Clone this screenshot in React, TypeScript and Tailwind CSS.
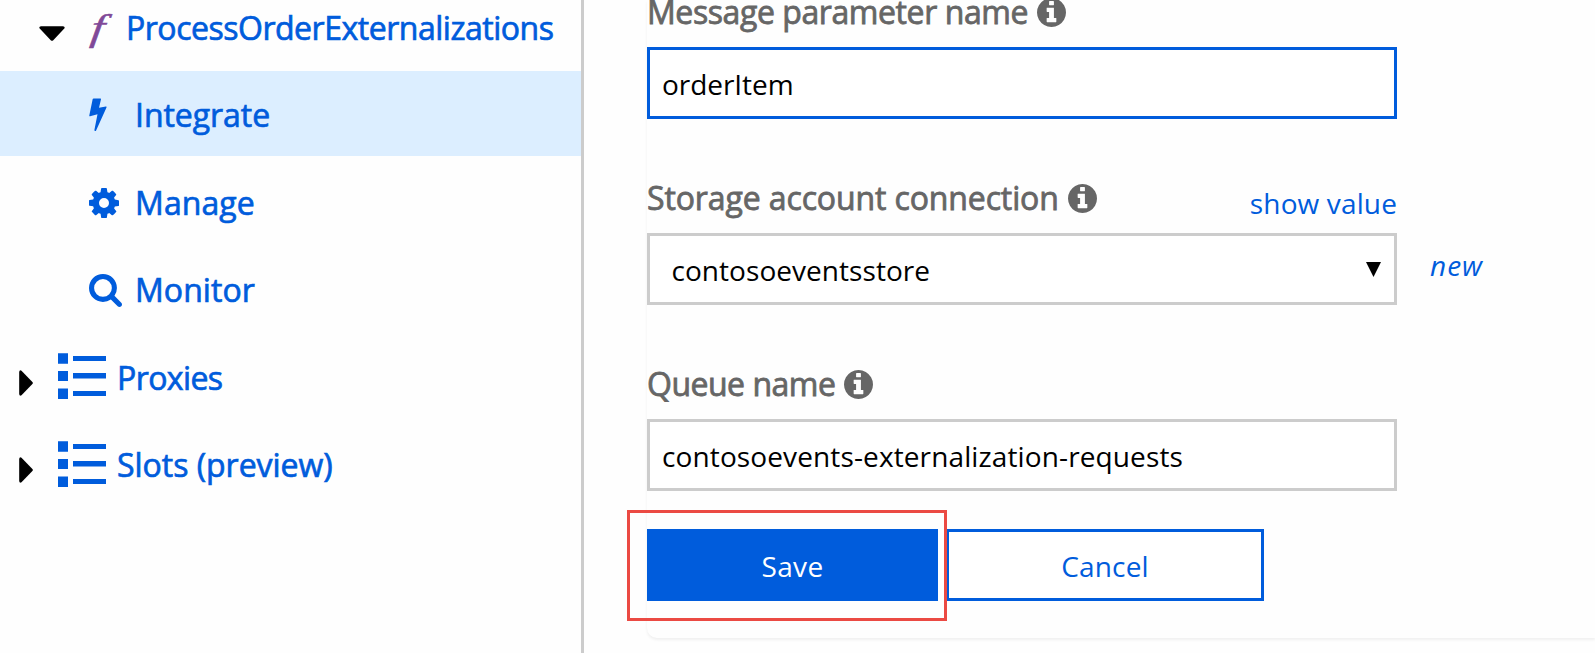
import type { ReactNode } from 'react';

function InfoIcon() {
  return (
    <svg className="h-[29px] w-[29px] shrink-0 fill-[#666]" viewBox="0 128 1536 1536">
      <path d="M1024 1376v-160q0-14-9-23t-23-9h-96v-512q0-14-9-23t-23-9h-320q-14 0-23 9t-9 23v160q0 14 9 23t23 9h96v320h-96q-14 0-23 9t-9 23v160q0 14 9 23t23 9h448q14 0 23-9t9-23zm-128-896v-160q0-14-9-23t-23-9h-192q-14 0-23 9t-9 23v160q0 14 9 23t23 9h192q14 0 23-9t9-23zm640 416q0 209-103 385.5t-279.5 279.5-385.5 103-385.5-103-279.5-279.5-103-385.5 103-385.5 279.5-279.5 385.5-103 385.5 103 279.5 279.5 103 385.5z" />
    </svg>
  );
}

function BoltIcon() {
  return (
    <svg className="mt-0.5 h-[34px] w-[18px] shrink-0 fill-[#005cdc]" viewBox="0 0 18 34">
      <path d="M4.6 .4H11.4Q12.2 .4 12 1.2L10 9.8 16.9 8.5Q17.9 8.4 17.5 9.4L7.1 32.5Q6.8 33 6.2 33 5.3 33 5.4 32L8.5 16.3 1.1 18.3Q.1 18.4 .3 17.4L3.7 1.1Q3.9 .4 4.6 .4Z" />
    </svg>
  );
}

function GearIcon() {
  return (
    <svg className="h-[30px] w-[30px] shrink-0 fill-[#005cdc]" viewBox="0 128 1536 1536">
      <path d="M1024 896q0-106-75-181t-181-75-181 75-75 181 75 181 181 75 181-75 75-181zm512-109v222q0 12-8 23t-20 13l-185 28q-19 54-39 91 35 50 107 138 10 12 10 25t-9 23q-27 37-99 108t-94 71q-12 0-26-9l-138-108q-44 23-91 38-16 136-29 186-7 28-36 28h-222q-14 0-24.5-8.5t-11.5-21.5l-28-184q-49-16-90-37l-141 107q-10 9-25 9-14 0-25-11-126-114-165-168-7-10-7-23 0-12 8-23 15-21 51-66.5t54-70.5q-27-50-41-99l-183-27q-13-2-21-12.5t-8-23.5v-222q0-12 8-23t19-13l186-28q14-46 39-92-40-57-107-138-10-12-10-24 0-10 9-23 26-36 98.5-107.5t94.500-71.500q13 0 26 10l138 107q44-23 91-38 16-136 29-186 7-28 36-28h222q14 0 24.500 8.500t11.500 21.500l28 184q49 16 90 37l142-107q9-9 24-9 13 0 25 10 129 119 165 170 7 8 7 22 0 12-8 23-15 21-51 66.500t-54 70.500q26 50 41 98l183 28q13 2 21 12.500t8 23.500z" />
    </svg>
  );
}

function SearchIcon() {
  return (
    <svg className="mt-0.5 h-[33px] w-[33px] shrink-0 fill-[#005cdc]" viewBox="0 128 1664 1664">
      <path d="M1152 832q0-185-131.5-316.5t-316.5-131.5-316.5 131.5-131.5 316.5 131.5 316.5 316.5 131.5 316.5-131.5 131.5-316.5zm512 832q0 52-38 90t-90 38q-54 0-90-38l-343-342q-179 124-399 124-143 0-273.5-55.5t-225-150-150-225-55.5-273.5 55.5-273.5 150-225 225-150 273.5-55.5 273.5 55.5 225 150 150 225 55.5 273.5q0 220-124 399l343 343q37 37 37 90z" />
    </svg>
  );
}

function ListIcon() {
  return (
    <svg className="h-[46px] w-12 shrink-0 fill-[#005cdc]" viewBox="0 0 48 46">
      <path d="M0 .3h10v10.400H0zM0 18h10v10H0zM0 35.500h10V46H0zM15 3h33v5H15zM15 20h33v5.400H15zM15 38h33v5H15z" />
    </svg>
  );
}

function CaretDown() {
  return (
    <svg className="mt-3 h-[15px] w-[26px] shrink-0" viewBox="0 0 26 15">
      <path d="M2 .2H24Q26.500 .5 25.300 2.500L14 14.400Q13 15.200 12 14.400L.7 2.500Q-.5 .5 2 .2Z" />
    </svg>
  );
}

function CaretRight() {
  return (
    <svg className="mt-3 h-[26px] w-[14px] shrink-0" viewBox="0 0 14 26">
      <path d="M.2 2Q.5-.5 2.500 .7L13.400 12Q14.300 13 13.400 14L2.500 25.300Q.5 26.500 .2 24Z" />
    </svg>
  );
}

const navText = 'whitespace-nowrap text-[32px] leading-10 text-[#005cdc] [-webkit-text-stroke:0.7px_#005cdc]';
const labelText = 'whitespace-nowrap text-[32px] leading-6 text-[#666] [-webkit-text-stroke:0.8px_#666]';

function Field({ focused, children }: { focused?: boolean; children: ReactNode }) {
  return (
    <div
      className={
        'flex h-[72px] w-[750px] shrink-0 items-center justify-between border-[3px] bg-white text-[28px] text-black ' +
        (focused ? 'border-[#005cdc]' : 'border-[#ccc]')
      }
    >
      {children}
    </div>
  );
}

function Sidebar() {
  return (
    <nav className="flex h-full w-[584px] shrink-0 flex-col border-r-[3px] border-[#ccc]">
      <div className="mb-4 flex h-[55px] shrink-0 items-center pl-[39px]">
        <CaretDown />
        <span className="ml-[21px] flex w-10 pl-[7px] font-['Liberation_Serif',serif] text-[37px] leading-10 text-[#804998] italic">
          <span className="inline-block scale-x-[1.3] -skew-x-6 [-webkit-text-stroke:0.5px_#804998]">f</span>
        </span>
        <span className={navText + ' tracking-[-0.48px]'}>ProcessOrderExternalizations</span>
      </div>
      <div className="mb-[3px] flex h-[85px] shrink-0 items-center bg-[#dceeff] pl-[89px]">
        <BoltIcon />
        <span className={navText + ' ml-[28px] pt-0.5 tracking-[-0.05px]'}>Integrate</span>
      </div>
      <div className="flex h-[87px] shrink-0 items-center pl-[89px]">
        <GearIcon />
        <span className={navText + ' ml-4 pt-px tracking-[0.1px]'}>Manage</span>
      </div>
      <div className="flex h-[87px] shrink-0 items-center pl-[89px]">
        <SearchIcon />
        <span className={navText + ' ml-[13px] pt-px tracking-[0.05px]'}>Monitor</span>
      </div>
      <div className="flex h-[87px] shrink-0 items-center pl-[19px]">
        <CaretRight />
        <span className="mb-0.5 ml-[25px]">
          <ListIcon />
        </span>
        <span className={navText + ' ml-[11px] pt-0.5 tracking-[-0.6px]'}>Proxies</span>
      </div>
      <div className="flex h-[88px] shrink-0 items-center pl-[19px]">
        <CaretRight />
        <span className="ml-[25px]">
          <ListIcon />
        </span>
        <span className={navText + ' ml-[11px] pt-0.5 tracking-[-0.03px]'}>Slots (preview)</span>
      </div>
    </nav>
  );
}

export default function App() {
  return (
    <div className="flex h-[653px] w-[1595px] overflow-hidden bg-[#fefefe] font-['Open_Sans',sans-serif]">
      <Sidebar />
      <main className="flex-1 overflow-hidden pl-[63px]">
        <div className="flex h-[638px] flex-col rounded-bl-[10px] bg-[#fefefe] shadow-[0_2px_3px_rgba(0,0,0,0.06)]">
          <div className="mb-[23px] flex h-6 shrink-0 items-center gap-[9px]">
            <span className={labelText + ' tracking-[-0.42px]'}>Message parameter name</span>
            <InfoIcon />
          </div>
          <Field focused>
            <span className="pt-0.5 pl-3 tracking-[-0.05px]">orderItem</span>
          </Field>

          <div className="mt-[66px] mb-[22px] flex h-[26px] w-[750px] shrink-0 items-center gap-[9px]">
            <span className={labelText + ' tracking-[-0.12px]'}>Storage account connection</span>
            <InfoIcon />
            <button className="mt-[9px] ml-auto text-[28px] leading-6 tracking-[0.13px] text-[#005cdc]">show value</button>
          </div>
          <div className="flex items-center">
            <Field>
              <span className="pt-0.5 pl-[21.5px] tracking-[0.05px]">contosoeventsstore</span>
              <svg className="mr-[13px] h-[15px] w-[15px]" viewBox="0 0 15 15">
                <path d="M0 0H15L7.500 15Z" />
              </svg>
            </Field>
            <button className="ml-[33px] pb-2 text-[28px] tracking-[1px] text-[#005cdc] italic">new</button>
          </div>

          <div className="mt-[67px] mb-[23px] flex h-6 shrink-0 items-center gap-[9px]">
            <span className={labelText + ' tracking-[-0.5px]'}>Queue name</span>
            <InfoIcon />
          </div>
          <Field>
            <span className="pt-0.5 pl-3 tracking-[0.12px]">contosoevents-externalization-requests</span>
          </Field>

          <div className="mt-[38px] flex gap-[8px] text-[28px]">
            <div className="relative">
              <button className="h-[72px] w-[291px] bg-[#005cdc] pt-0.5 tracking-[0.3px] text-white">Save</button>
              <div className="pointer-events-none absolute -top-[19px] -left-5 h-[111px] w-80 border-[3px] border-[#eb4a43]" />
            </div>
            <button className="h-[72px] w-[318px] border-[3px] border-[#005cdc] bg-white pt-0.5 tracking-[0.15px] text-[#005cdc]">Cancel</button>
          </div>
        </div>
      </main>
    </div>
  );
}
